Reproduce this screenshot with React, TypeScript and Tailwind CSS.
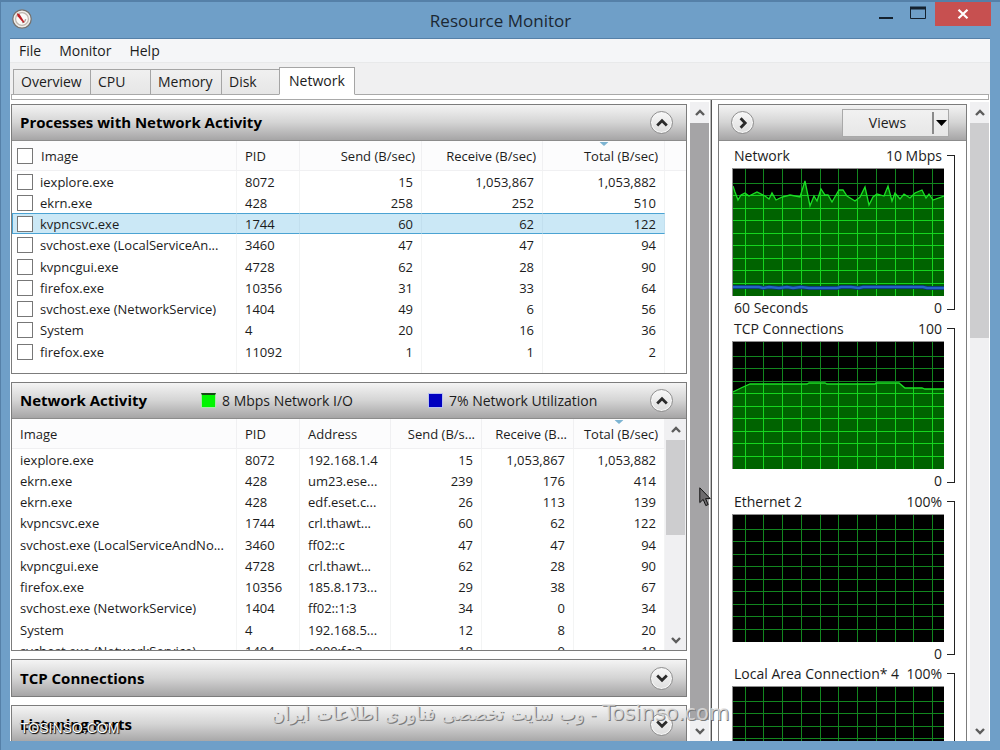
import { useState } from 'react';
import clsx from 'clsx';

interface ProcessRow {
    image: string;
    pid: number;
    send: string;
    receive: string;
    total: string;
}

interface ActivityRow extends ProcessRow {
    address: string;
}

const processes: ProcessRow[] = [
    { image: 'iexplore.exe', pid: 8072, send: '15', receive: '1,053,867', total: '1,053,882' },
    { image: 'ekrn.exe', pid: 428, send: '258', receive: '252', total: '510' },
    { image: 'kvpncsvc.exe', pid: 1744, send: '60', receive: '62', total: '122' },
    { image: 'svchost.exe (LocalServiceAn...', pid: 3460, send: '47', receive: '47', total: '94' },
    { image: 'kvpncgui.exe', pid: 4728, send: '62', receive: '28', total: '90' },
    { image: 'firefox.exe', pid: 10356, send: '31', receive: '33', total: '64' },
    { image: 'svchost.exe (NetworkService)', pid: 1404, send: '49', receive: '6', total: '56' },
    { image: 'System', pid: 4, send: '20', receive: '16', total: '36' },
    { image: 'firefox.exe', pid: 11092, send: '1', receive: '1', total: '2' },
];

const activity: ActivityRow[] = [
    { image: 'iexplore.exe', pid: 8072, address: '192.168.1.4', send: '15', receive: '1,053,867', total: '1,053,882' },
    { image: 'ekrn.exe', pid: 428, address: 'um23.ese...', send: '239', receive: '176', total: '414' },
    { image: 'ekrn.exe', pid: 428, address: 'edf.eset.c...', send: '26', receive: '113', total: '139' },
    { image: 'kvpncsvc.exe', pid: 1744, address: 'crl.thawt...', send: '60', receive: '62', total: '122' },
    { image: 'svchost.exe (LocalServiceAndNo...', pid: 3460, address: 'ff02::c', send: '47', receive: '47', total: '94' },
    { image: 'kvpncgui.exe', pid: 4728, address: 'crl.thawt...', send: '62', receive: '28', total: '90' },
    { image: 'firefox.exe', pid: 10356, address: '185.8.173...', send: '29', receive: '38', total: '67' },
    { image: 'svchost.exe (NetworkService)', pid: 1404, address: 'ff02::1:3', send: '34', receive: '0', total: '34' },
    { image: 'System', pid: 4, address: '192.168.5...', send: '12', receive: '8', total: '20' },
    { image: 'svchost.exe (NetworkService)', pid: 1404, address: 'e000:fc:2...', send: '18', receive: '0', total: '18' },
];

const tabs = [
    { name: 'Overview', width: 'w-[78px]' },
    { name: 'CPU', width: 'w-[61px]' },
    { name: 'Memory', width: 'w-[72px]' },
    { name: 'Disk', width: 'w-[59px]' },
    { name: 'Network', width: 'w-[76px]' },
];

const networkLine =
    '0,17 2,23 5,31 8,26 12,24 16,27 24,23 32,27 36,30 39,24 43,31 49,28 57,26 67,28 72,12 77,37 81,27 84,32 88,20 92,26 95,26 99,33 106,21 110,21 114,27 122,32 127,28 132,18 136,36 140,28 144,25 151,27 155,17 159,32 162,24 167,30 171,25 177,29 182,24 189,21 193,29 196,25 200,31 211,27';
const utilizationLine =
    '0,118 26,118 30,119 36,118 46,119 54,118 60,119 68,118 76,119 104,119 108,118 118,118 126,119 130,118 190,118 194,119 211,119';
const tcpLine =
    '0,50 8,46 17,42 74,42 76,41 92,41 94,42 142,42 143,41 166,41 172,46 189,46 192,47 211,47';

const charts = [
    { title: 'Network', max: '10 Mbps', caption: '60 Seconds', line: networkLine, blue: utilizationLine },
    { title: 'TCP Connections', max: '100', line: tcpLine },
    { title: 'Ethernet 2', max: '100%' },
    { title: 'Local Area Connection* 4', max: '100%' },
];

const Chevron = ({ className }: { className?: string }) => (
    <svg viewBox="0 0 10 10" className={clsx('size-[10px]', className)} aria-hidden="true">
        <path d="M1 7 L5 3 L9 7" fill="none" stroke="currentColor" strokeWidth="2.4" />
    </svg>
);

const RoundButton = ({ label, turn }: { label: string; turn?: string }) => (
    <button
        aria-label={label}
        className="flex size-[23px] shrink-0 items-center justify-center rounded-full border border-[#8f8f8f] bg-gradient-to-b from-[#f8f8f8] to-[#dedede] text-[#2b2b2b] shadow-[inset_0_0_0_1px_#f6f6f6]"
    >
        <svg viewBox="0 0 12 12" className={clsx('size-[12px]', turn)} aria-hidden="true">
            <path d="M1.2 8.4 L6 3.8 L10.8 8.4" fill="none" stroke="currentColor" strokeWidth="2.8" />
        </svg>
    </button>
);

interface ScrollBarProps {
    thumb: string;
    className?: string;
}

const ScrollBar = ({ thumb, className }: ScrollBarProps) => (
    <div className={clsx('flex shrink-0 flex-col bg-[#f0f0f2] text-[#5c5c5c]', className)}>
        <button aria-label="Scroll up" className="flex h-[21px] shrink-0 items-center justify-center">
            <Chevron />
        </button>
        <div className="min-h-0 flex-1">
            <div className={thumb} />
        </div>
        <button aria-label="Scroll down" className="flex h-[21px] shrink-0 items-center justify-center">
            <Chevron className="rotate-180" />
        </button>
    </div>
);

interface PanelProps {
    title: string;
    open?: boolean;
    legend?: React.ReactNode;
    children?: React.ReactNode;
}

const Panel = ({ title, open, legend, children }: PanelProps) => (
    <section className="shrink-0 border border-[#7c7c7c] bg-white">
        <header
            className={clsx(
                'flex h-9 items-center bg-gradient-to-b from-[#f4f4f4] via-[#d4d4d4] to-[#a6a5a6] pr-[13px] pl-2',
                children && 'border-b border-[#8c8c8c]',
            )}
        >
            <h2 className="w-[181px] text-[15px] font-bold whitespace-nowrap text-black">{title}</h2>
            {legend}
            <div className="ml-auto">
                <RoundButton
                    label={open ? `Collapse ${title}` : `Expand ${title}`}
                    turn={open ? undefined : 'rotate-180'}
                />
            </div>
        </header>
        {children}
    </section>
);

const SortMark = () => (
    <svg viewBox="0 0 9 4" className="absolute top-px left-1/2 h-1 w-[9px] -translate-x-1/2" aria-hidden="true">
        <path d="M0 0H9L4.5 4Z" fill="#7db4d2" />
    </svg>
);

const headCell = 'relative h-[30px] border-r border-b border-[#f0f0f2] bg-[#fcfcfd] pt-px font-normal';
const bodyRow = 'h-[21px] [&:nth-child(4n)]:h-[22px]';

const ProcessTable = () => {
    const [selected, setSelected] = useState(2);

    return (
        <table className="w-full table-fixed border-separate border-spacing-0 leading-[18px] whitespace-nowrap">
            <colgroup>
                <col className="w-[225px]" />
                <col className="w-[63px]" />
                <col className="w-[122px]" />
                <col className="w-[121px]" />
                <col className="w-[122px]" />
                <col />
            </colgroup>
            <thead>
                <tr>
                    <th className={clsx(headCell, 'pl-[5px] text-left')}>
                        <label className="flex items-center gap-2">
                            <input type="checkbox" className="size-4 appearance-none border border-[#777] bg-white" />
                            Image
                        </label>
                    </th>
                    <th className={clsx(headCell, 'pl-2 text-left')}>PID</th>
                    <th className={clsx(headCell, 'pr-[6px] text-right')}>Send (B/sec)</th>
                    <th className={clsx(headCell, 'pr-[6px] text-right')}>Receive (B/sec)</th>
                    <th className={clsx(headCell, 'pr-[6px] text-right')}>
                        <SortMark />
                        Total (B/sec)
                    </th>
                    <th className={clsx(headCell, 'border-r-0')} />
                </tr>
            </thead>
            <tbody>
                {processes.map((p, i) => {
                    const on = i === selected;
                    const cell = on
                        ? 'border-y border-r border-y-[#4ba3d3] border-r-[#c2dfee] bg-[#cbe8f6]'
                        : 'border-r border-[#f3f4f4]';
                    return (
                        <tr key={p.pid} className={bodyRow} onClick={() => setSelected(i)}>
                            <td className={clsx(cell, on ? 'border-l border-l-[#4ba3d3] pl-[4px]' : 'pl-[5px]')}>
                                <label className="flex items-center gap-[7px]">
                                    <input
                                        type="checkbox"
                                        className="size-4 appearance-none border border-[#777] bg-white"
                                    />
                                    {p.image}
                                </label>
                            </td>
                            <td className={clsx(cell, 'pl-2')}>{p.pid}</td>
                            <td className={clsx(cell, 'pr-2 text-right')}>{p.send}</td>
                            <td className={clsx(cell, 'pr-2 text-right')}>{p.receive}</td>
                            <td className={clsx(cell, 'pr-2 text-right', on && 'border-r-[#4ba3d3]')}>{p.total}</td>
                            <td />
                        </tr>
                    );
                })}
                <tr className="h-[11px]">
                    <td className="border-r border-[#f3f4f4]" />
                    <td className="border-r border-[#f3f4f4]" />
                    <td className="border-r border-[#f3f4f4]" />
                    <td className="border-r border-[#f3f4f4]" />
                    <td className="border-r border-[#f3f4f4]" />
                    <td />
                </tr>
            </tbody>
        </table>
    );
};

const ActivityTable = () => {
    const cell = 'border-r border-[#f3f4f4]';

    return (
        <div className="flex h-[231px] overflow-hidden">
            <div className="min-w-0 flex-1">
                <table className="w-full table-fixed border-separate border-spacing-0 leading-[18px] whitespace-nowrap">
                    <colgroup>
                        <col />
                        <col className="w-[63px]" />
                        <col className="w-[91px]" />
                        <col className="w-[91px]" />
                        <col className="w-[92px]" />
                        <col className="w-[91px]" />
                    </colgroup>
                    <thead>
                        <tr>
                            <th className={clsx(headCell, 'pl-2 text-left')}>Image</th>
                            <th className={clsx(headCell, 'pl-2 text-left')}>PID</th>
                            <th className={clsx(headCell, 'pl-2 text-left')}>Address</th>
                            <th className={clsx(headCell, 'pr-[6px] text-right')}>Send (B/s...</th>
                            <th className={clsx(headCell, 'pr-[6px] text-right')}>Receive (B...</th>
                            <th className={clsx(headCell, 'pr-[6px] text-right')}>
                                <SortMark />
                                Total (B/sec)
                            </th>
                        </tr>
                    </thead>
                    <tbody>
                        {activity.map((a, i) => (
                            <tr key={i} className={bodyRow}>
                                <td className={clsx(cell, 'pl-2')}>{a.image}</td>
                                <td className={clsx(cell, 'pl-2')}>{a.pid}</td>
                                <td className={clsx(cell, 'pl-2')}>{a.address}</td>
                                <td className={clsx(cell, 'pr-2 text-right')}>{a.send}</td>
                                <td className={clsx(cell, 'pr-2 text-right')}>{a.receive}</td>
                                <td className={clsx(cell, 'pr-2 text-right')}>{a.total}</td>
                            </tr>
                        ))}
                    </tbody>
                </table>
            </div>
            <ScrollBar className="w-[21px]" thumb="mr-px ml-px h-[95px] bg-[#cdcdcf]" />
        </div>
    );
};

interface ChartProps {
    id: string;
    line?: string;
    blue?: string;
}

const columns = Array.from({ length: 11 }, (_, i) => Math.floor(12 + i * 18.75) + 0.5);
const rows = Array.from({ length: 9 }, (_, i) => Math.floor(14 + i * 12.5) + 0.5);

const Grid = ({ color }: { color: string }) => (
    <g stroke={color} strokeWidth="1">
        {columns.map((x) => (
            <line key={x} x1={x} x2={x} y1="0" y2="127" />
        ))}
        {rows.map((y) => (
            <line key={y} x1="0" x2="211" y1={y} y2={y} />
        ))}
    </g>
);

const Chart = ({ id, line, blue }: ChartProps) => (
    <svg
        viewBox="0 0 211 127"
        preserveAspectRatio="none"
        className="h-[128px] w-full border-t border-l border-[#8e8e8e] bg-black"
        role="img"
        aria-label={id}
    >
        <Grid color="#12861f" />
        {line && (
            <>
                <clipPath id={`area-${id}`}>
                    <polygon points={`0,127 ${line} 211,127`} />
                </clipPath>
                <g clipPath={`url(#area-${id})`}>
                    <rect width="211" height="127" fill="#006300" />
                    <Grid color="#16d41f" />
                </g>
                <polyline points={line} fill="none" stroke="#1be025" strokeWidth="1.3" />
            </>
        )}
        {blue && (
            <>
                <polyline points={blue} fill="none" stroke="#0b2f68" strokeWidth="4" />
                <polyline points={blue} fill="none" stroke="#2464c4" strokeWidth="2.4" />
            </>
        )}
    </svg>
);

const ChartPanel = () => (
    <aside className="flex w-[249px] shrink-0 flex-col overflow-hidden border border-b-0 border-[#7c7c7c] bg-white text-sm">
        <header className="flex h-9 shrink-0 items-center justify-between border-b border-[#8c8c8c] bg-gradient-to-b from-[#f4f4f4] via-[#d4d4d4] to-[#a6a5a6] pr-[17px] pl-3">
            <RoundButton label="Hide charts" turn="rotate-90" />
            <div className="flex h-7 w-[107px] items-center border border-[#a9a9a9] bg-gradient-to-b from-[#f1f1f1] to-[#e7e7e7]">
                <button className="h-full flex-1">Views</button>
                <button
                    aria-label="Choose view size"
                    className="flex h-[22px] w-4 items-center justify-center border-l-2 border-[#8a8a8a]"
                >
                    <svg viewBox="0 0 11 6" className="h-[6px] w-[11px]" aria-hidden="true">
                        <path d="M0 0H11L5.5 6Z" fill="#000" />
                    </svg>
                </button>
            </div>
        </header>
        <div className="flex flex-col pt-[5px] pr-[11px] pl-[13px]">
            {charts.map((c, i) => (
                <div key={c.title} className={clsx('flex shrink-0', i % 3 === 2 ? 'h-[172px]' : 'h-[173px]')}>
                    <div className="min-w-0 flex-1">
                        <div className="flex h-[22px] justify-between pr-[2px] pl-[2px] leading-5 whitespace-nowrap">
                            <span>{c.title}</span>
                            <span>{c.max}</span>
                        </div>
                        <Chart id={c.title.replace(/\W/g, '-')} line={c.line} blue={c.blue} />
                        <div className="flex justify-between pt-[2px] pr-[2px] pl-[2px] leading-5">
                            <span>{c.caption}</span>
                            <span>0</span>
                        </div>
                    </div>
                    <div className="mt-[9px] mb-[9px] ml-[3px] w-2 border-y border-r border-[#222]" />
                </div>
            ))}
        </div>
    </aside>
);

const TitleBar = () => (
    <header className="grid h-[37px] shrink-0 grid-cols-[1fr_auto_1fr]">
        <div className="pt-2 pl-[11px]">
            <svg viewBox="0 0 20 20" className="size-5" aria-hidden="true">
                <circle cx="10" cy="10" r="9.2" fill="#f1eeea" stroke="#74706c" strokeWidth="1.2" />
                <circle cx="10" cy="10" r="6.4" fill="#fbfaf8" stroke="#bdb5ae" strokeWidth="1.2" />
                <path d="M10 13.6a3.6 3.6 0 0 0 3.6-3.6" fill="none" stroke="#b3aba5" strokeWidth="1.4" />
                <path d="M4.8 4.2 L7.6 5.2 L12.6 13.2 L11.2 13.8 L5.6 7.2Z" fill="#bf1f25" />
            </svg>
        </div>
        <h1 className="pt-2 text-[17px] leading-6 text-[#1b2733]">Resource Monitor</h1>
        <div className="flex items-start justify-end pr-[9px] text-[#14212e]">
            <button aria-label="Minimize" className="flex h-6 w-8 items-center justify-center">
                <svg viewBox="0 0 16 14" className="h-[14px] w-4" aria-hidden="true">
                    <path d="M1 12H15" stroke="currentColor" strokeWidth="2" />
                </svg>
            </button>
            <button aria-label="Maximize" className="flex h-6 w-8 items-center justify-center">
                <svg viewBox="0 0 16 14" className="h-[14px] w-4" aria-hidden="true">
                    <path d="M0.5 1.5H15.5V12.5H0.5Z" fill="none" stroke="currentColor" />
                    <path d="M0 2H16" stroke="currentColor" strokeWidth="3" />
                </svg>
            </button>
            <button
                aria-label="Close"
                className="ml-px flex h-[25px] w-14 items-center justify-center bg-[#c75050] text-white"
            >
                <svg viewBox="0 0 12 10" className="h-[10px] w-3" aria-hidden="true">
                    <path d="M1.5 0.8 L10.5 9.2 M10.5 0.8 L1.5 9.2" stroke="currentColor" strokeWidth="2.2" />
                </svg>
            </button>
        </div>
    </header>
);

const App: React.FC = () => {
    const [tab, setTab] = useState('Network');

    return (
        <div className="relative flex h-screen flex-col overflow-hidden border-t-2 border-l border-[#5580a8] bg-[#6f9fc8] font-['Open_Sans','Noto_Sans',sans-serif] text-[13px] text-[#1c1c1c]">
            <div className="-mt-px flex min-h-0 flex-1 flex-col">
                <TitleBar />
                <main className="mr-[10px] mb-[9px] ml-[9px] flex min-h-0 flex-1 flex-col overflow-hidden border-t border-[#5580a8] bg-white">
                    <nav className="flex h-6 shrink-0 items-center gap-[18px] border-b border-[#e8e9ea] bg-[#f5f6f8] pl-[9px] text-sm">
                        <button>File</button>
                        <button>Monitor</button>
                        <button>Help</button>
                    </nav>
                    <div className="flex h-8 shrink-0 items-end bg-[#f0f0f1] pl-[3px] text-sm" role="tablist">
                        {tabs.map((t) => (
                            <button
                                key={t.name}
                                role="tab"
                                aria-selected={tab === t.name}
                                onClick={() => setTab(t.name)}
                                className={clsx(
                                    t.width,
                                    '-mr-px border text-left',
                                    tab === t.name
                                        ? 'z-10 h-[28px] border-[#a5a5a5] border-b-white bg-white pl-[9px]'
                                        : 'h-[26px] border-[#a5a5a5] bg-gradient-to-b from-[#f0f0f0] to-[#e6e6e6] pl-[7px]',
                                )}
                            >
                                {t.name}
                            </button>
                        ))}
                    </div>
                    <div className="mx-px -mt-px h-[6px] shrink-0 border border-[#a9a9a9] bg-white" />
                    <div className="flex min-h-0 flex-1">
                        <div className="flex min-w-0 flex-1 flex-col gap-2 overflow-hidden pt-1 pr-[3px] pl-px">
                            <Panel title="Processes with Network Activity" open>
                                <ProcessTable />
                            </Panel>
                            <Panel
                                title="Network Activity"
                                open
                                legend={
                                    <>
                                        <div className="flex w-[227px] items-center gap-[6px] text-sm whitespace-nowrap">
                                            <span className="size-[15px] border border-t-2 border-[#a8e8a8] border-t-[#164a16] bg-[#00f500]" />
                                            8 Mbps Network I/O
                                        </div>
                                        <div className="flex items-center gap-[6px] text-sm whitespace-nowrap">
                                            <span className="size-[15px] border border-[#b9c2f0] bg-[#0000c0]" />
                                            7% Network Utilization
                                        </div>
                                    </>
                                }
                            >
                                <ActivityTable />
                            </Panel>
                            <Panel title="TCP Connections" />
                            <Panel title="Listening Ports" />
                        </div>
                        <ScrollBar className="mt-[2px] w-[19px]" thumb="h-full bg-[#a5a4a6]" />
                        <div className="mr-[6px] ml-px w-[2px] shrink-0 border-r border-[#555] bg-[#bbb]" />
                        <div className="flex min-h-0 shrink-0 pt-1">
                            <ChartPanel />
                        </div>
                        <ScrollBar className="mt-[2px] mr-px ml-[3px] w-[19px]" thumb="h-[215px] bg-[#cdcdcf]" />
                    </div>
                </main>
            </div>

            <svg viewBox="0 0 12 20" className="absolute top-[485px] left-[698px] h-5 w-3" aria-hidden="true">
                <path
                    d="M0.8 0.8V15.6L4.2 12.4L6.8 18.6L9.2 17.6L6.6 11.6H11.2Z"
                    fill="#6e6c6e"
                    stroke="#111"
                    strokeWidth="1"
                />
            </svg>
            <div className="pointer-events-none absolute bottom-3 left-[19px] font-['Liberation_Sans',sans-serif] text-sm text-white [text-shadow:1px_1px_1px_#000,0_0_1px_#000]">
                TOSINSO.COM
            </div>
            <div
                dir="rtl"
                className="pointer-events-none absolute inset-x-0 bottom-5 text-center font-['DejaVu_Sans',sans-serif] text-lg text-[#e2e2e2]/80 [text-shadow:1px_1px_0_#7a7a7a]"
            >
                <span className="text-[21px]">Tosinso.com</span> - وب سایت تخصصی فناوری اطلاعات ایران
            </div>
        </div>
    );
};

export default App;
